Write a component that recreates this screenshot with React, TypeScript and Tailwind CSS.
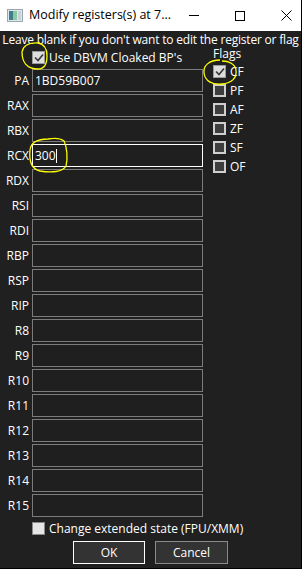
import React from "react";

const regs = ["PA", "RAX", "RBX", "RCX", "RDX", "RSI", "RDI", "RBP", "RSP", "RIP", "R8", "R9", "R10", "R11", "R12", "R13", "R14", "R15"];
const values: Record<string, string> = { PA: "1BD59B007", RCX: "300" };
const flags = ["CF", "PF", "AF", "ZF", "SF", "OF"];

const Check = () => (
  <svg width="10" height="9" viewBox="0 0 10 9" className="block">
    <path d="M1 4.5 L4 7.5 L9 1.5" fill="none" stroke="#3c3c3c" strokeWidth="1.7" />
  </svg>
);

const CheckBox = ({ checked, light }: { checked?: boolean; light?: boolean }) => {
  if (checked)
    return (
      <div className="w-[13px] h-[13px] bg-[#dedede] border border-[#9a9a9a] flex items-center justify-center shrink-0">
        <Check />
      </div>
    );
  if (light) return <div className="w-[13px] h-[13px] bg-[#e6e6e6] border border-[#8a8a8a] shrink-0" />;
  return <div className="w-[13px] h-[13px] bg-[#3e3e3e] border-2 border-[#cfcfcf] shrink-0" />;
};

const TitleBar = () => (
  <div className="h-[31px] bg-white flex items-center shrink-0">
    <svg width="16" height="13" viewBox="0 0 16 13" className="ml-[7px] shrink-0">
      <rect x="0.5" y="0.5" width="15" height="12" fill="#dfe6ec" stroke="#9aa6b2" />
      <rect x="2" y="2" width="4" height="9" fill="#3f7f8c" />
      <rect x="6" y="2" width="4" height="9" fill="#8fc7a0" />
      <rect x="11" y="2" width="3" height="9" fill="#c9d2db" />
    </svg>
    <span className="ml-[6px] text-[12.5px] text-black leading-none whitespace-nowrap">Modify registers(s) at 7...</span>
    <div className="ml-auto flex h-full">
      <div className="w-[46px] flex items-center justify-center">
        <div className="w-[10px] h-px bg-black" />
      </div>
      <div className="w-[46px] flex items-center justify-center">
        <div className="w-[10px] h-[10px] border border-black" />
      </div>
      <div className="w-[46px] flex items-center justify-center">
        <svg width="11" height="11" viewBox="0 0 11 11">
          <path d="M0.5 0.5 L10.5 10.5 M10.5 0.5 L0.5 10.5" stroke="#000" strokeWidth="1" />
        </svg>
      </div>
    </div>
  </div>
);

export default function App() {
  return (
    <div className="w-[305px] h-[572px] bg-white" style={{ fontFamily: '"Open Sans", "Noto Sans", sans-serif' }}>
      <div className="w-[302px] h-[569px] flex flex-col border-r border-b border-black bg-[#202020]">
        <TitleBar />
        <div className="relative flex-1 text-white text-[12px]">
          <div className="h-[15px] leading-[15px] pt-[0.5px] text-center tracking-[-0.2px] whitespace-nowrap">
            Leave blank if you don't want to edit the register or flag
          </div>
          <div className="flex">
            <div className="w-[203px] shrink-0">
              <div className="h-[23px] flex items-center pl-[32px] gap-[4px]">
                <CheckBox checked />
                <span className="leading-none whitespace-nowrap">Use DBVM Cloaked BP's</span>
              </div>
              <div className="flex flex-col gap-[2px]">
                {regs.map((r) => (
                  <div key={r} className="flex items-center h-[23px]">
                    <span className="w-[30px] text-right pr-[1px] leading-none">{r}</span>
                    <div
                      className={`ml-[2px] w-[171px] h-[23px] flex items-center px-[2px] border-[1.5px] ${
                        r === "RCX" ? "border-white" : "border-[#7c7c7c]"
                      } bg-[#1f1f1f]`}
                    >
                      <span className="leading-none">{values[r] ?? ""}</span>
                      {r === "RCX" && <span className="w-px h-[14px] bg-white" />}
                    </div>
                  </div>
                ))}
              </div>
              <div className="h-[19px] flex items-center pl-[32px] gap-[4px] mt-[2px]">
                <CheckBox light />
                <span className="leading-none whitespace-nowrap">Change extended state (FPU/XMM)</span>
              </div>
            </div>
            <div className="ml-[10px] pt-[2px]">
              <div className="h-[12px] leading-[12px] mb-[2px]">Flags</div>
              <div className="flex flex-col">
                {flags.map((f, i) => (
                  <div key={f} className="h-[19px] flex items-center gap-[4px]">
                    <CheckBox checked={i === 0} />
                    <span className="leading-none">{f}</span>
                  </div>
                ))}
              </div>
            </div>
          </div>
          <div className="flex gap-[10px] mt-[3px] pl-[73px]">
            <button className="w-[72px] h-[23px] bg-[#333333] border border-white text-white text-[12px] leading-none">OK</button>
            <button className="w-[73px] h-[23px] bg-[#333333] border border-[#8a8a8a] text-white text-[12px] leading-none">Cancel</button>
          </div>
          <svg className="absolute left-0 top-0 pointer-events-none" width="302" height="538" viewBox="0 31 302 538">
            <path d="M40 43 C30 42 23 45 22 52 C22 62 27 69 38 69 C45 69 47 64 47 56 C47 48 44 44 38 43" fill="none" stroke="#ffff00" strokeWidth="1.3" />
            <path d="M220 60 C209 60 203 66 204 73 C205 81 212 85 222 84 C232 83 237 78 236 70 C235 64 229 61 222 61" fill="none" stroke="#ffff00" strokeWidth="1.3" />
            <path d="M48 139 C38 139 31 142 30 150 C29 160 31 169 40 171 C51 173 63 172 66 166 C68 158 67 147 64 141 C60 138 54 138 48 139" fill="none" stroke="#ffff00" strokeWidth="1.3" />
          </svg>
        </div>
      </div>
    </div>
  );
}
